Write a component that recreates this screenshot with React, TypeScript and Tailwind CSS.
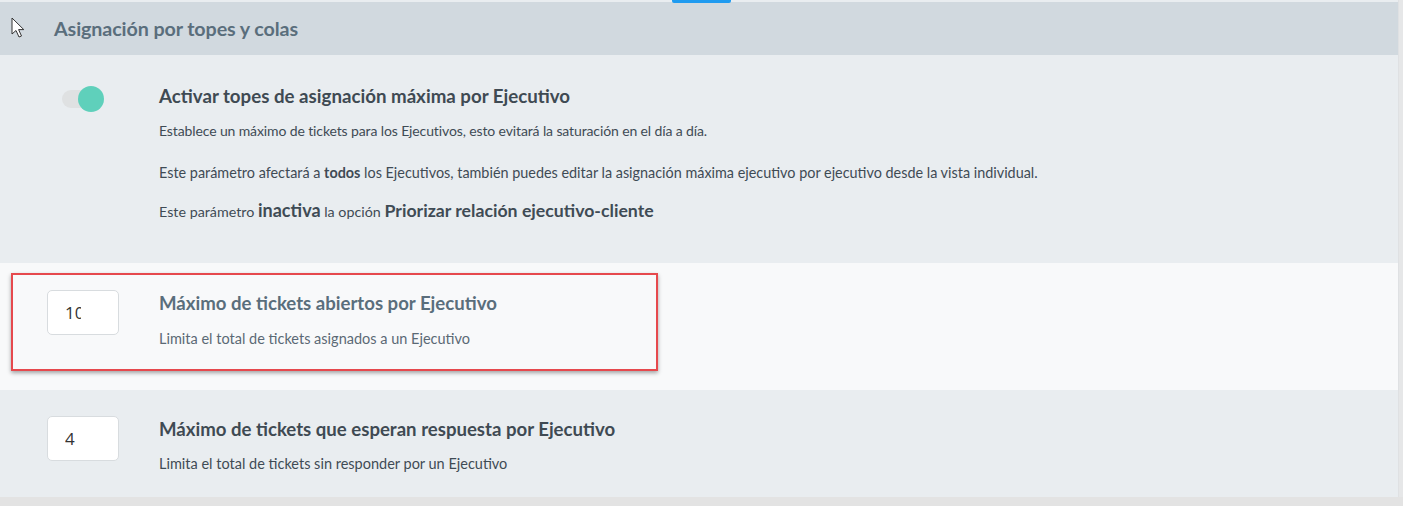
import React from "react";

function Cursor() {
  return (
    <svg width="14" height="22" viewBox="0 0 14 22" className="absolute left-[11px] top-[15px]">
      <path d="M1 1 L1 17 L5 13.5 L8 20 L10.5 19 L7.6 12.6 L12.8 12.6 Z" fill="#ffffff" stroke="#333" strokeWidth="1" strokeLinejoin="round" />
    </svg>
  );
}

function NumBox({ value }: { value: string }) {
  return (
    <div className="w-[72px] h-[45px] shrink-0 bg-white border border-[#d8dcdf] rounded-[5px] flex items-center pl-[17px] overflow-hidden">
      <span className="text-[17px] text-[#333] font-['Open_Sans',sans-serif] w-[16px] overflow-hidden whitespace-nowrap">{value}</span>
    </div>
  );
}

export default function App() {
  return (
    <div className="w-[1403px] h-[506px] bg-[#e4e5e6] font-['Lato',sans-serif] flex flex-col overflow-hidden">
      <div className="flex flex-1">
        <div className="w-[1398px] flex flex-col relative bg-[#e9edf0]">
          {/* top line and tab */}
          <div className="h-[2px] bg-[#e9edf0] relative">
            <div className="absolute left-[672px] top-0 w-[59px] h-[3px] bg-[#1f9bf0] rounded-b-[2px] z-10" />
          </div>
          {/* header */}
          <div className="h-[53px] bg-[#d1d9df] flex items-center pl-[54px] relative">
            <Cursor />
            <span className="text-[19.7px] font-bold text-[#5a6e7c] tracking-[-0.1px]">Asignación por topes y colas</span>
          </div>
          {/* section 1 */}
          <div className="h-[208px] bg-[#e9edf0] flex pt-[29px]">
            <div className="w-[159px] shrink-0 pl-[62px]">
              <div className="relative w-[42px] h-[26px] mt-[2px]">
                <div className="absolute left-0 top-[4px] w-[34px] h-[18px] rounded-full bg-[#dfe1e2]" />
                <div className="absolute right-0 top-0 w-[26px] h-[26px] rounded-full bg-[#5fd0bb]" />
              </div>
            </div>
            <div className="flex flex-col text-[#3f4b55]">
              <div className="text-[18.7px] font-bold text-[#3f4a53] leading-[24px]">Activar topes de asignación máxima por Ejecutivo</div>
              <div className="text-[14px] leading-[18px] mt-[14px] tracking-[-0.12px]">Establece un máximo de tickets para los Ejecutivos, esto evitará la saturación en el día a día.</div>
              <div className="text-[14.4px] leading-[18px] mt-[24px]">
                Este parámetro afectará a <b className="font-bold">todos</b> los Ejecutivos, también puedes editar la asignación máxima ejecutivo por ejecutivo desde la vista individual.
              </div>
              <div className="leading-[24px] mt-[16px] whitespace-nowrap">
                <span className="text-[14.3px]">Este parámetro </span>
                <span className="text-[18px] font-bold">inactiva</span>
                <span className="text-[14.3px]"> la opción </span>
                <span className="text-[17.7px] font-bold">Priorizar relación ejecutivo-cliente</span>
              </div>
            </div>
          </div>
          {/* section 2 */}
          <div className="h-[127px] bg-[#f8f9fa] flex pt-[27px] relative">
            <div className="absolute left-[11px] top-[10px] w-[647px] h-[98px] border-2 border-[#e6494d] shadow-[0_2px_4px_rgba(0,0,0,0.35)]" />
            <div className="w-[159px] shrink-0 pl-[47px]">
              <NumBox value="10" />
            </div>
            <div className="flex flex-col">
              <div className="text-[18.6px] font-bold text-[#5a6e7c] leading-[24px] mt-[1px]">Máximo de tickets abiertos por Ejecutivo</div>
              <div className="text-[14.5px] text-[#5b6975] leading-[18px] mt-[15px]">Limita el total de tickets asignados a un Ejecutivo</div>
            </div>
          </div>
          {/* section 3 */}
          <div className="flex-1 bg-[#e9edf0] flex pt-[26px]">
            <div className="w-[159px] shrink-0 pl-[47px]">
              <NumBox value="4" />
            </div>
            <div className="flex flex-col">
              <div className="text-[18.6px] font-bold text-[#3f4a53] leading-[24px] mt-[1px]">Máximo de tickets que esperan respuesta por Ejecutivo</div>
              <div className="text-[14.5px] text-[#3f4b55] leading-[18px] mt-[14px]">Limita el total de tickets sin responder por un Ejecutivo</div>
            </div>
          </div>
        </div>
        <div className="flex-1 bg-[#e6e7e8] border-l border-[#dfe1e3]" />
      </div>
      <div className="h-[9px] bg-[#e3e3e3]" />
    </div>
  );
}
